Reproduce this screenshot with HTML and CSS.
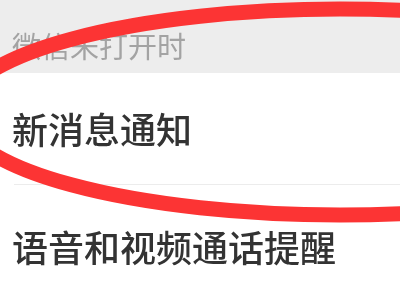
FILE: index.html
```html
<!DOCTYPE html>
<html lang="zh-CN">
<head>
<meta charset="utf-8">
<link rel="stylesheet" href="styles.css">
</head>
<body>
<div class="screen">
  <div class="section-header">微信未打开时</div>
  <div class="cell">新消息通知</div>
  <div class="divider"></div>
  <div class="cell cell-second">语音和视频通话提醒</div>
  <svg class="mark" width="400" height="300" viewBox="0 0 400 300">
    <ellipse cx="340" cy="112" rx="380" ry="103" fill="none" stroke="#fc3434" stroke-width="15"/>
  </svg>
</div>
</body>
</html>
```
FILE: styles.css
```css
html, body {
  margin: 0;
  padding: 0;
  background: #ffffff;
}
.screen {
  position: relative;
  width: 400px;
  height: 300px;
  overflow: hidden;
  font-family: "Noto Sans CJK SC", "Noto Sans", sans-serif;
  background: #ffffff;
  filter: blur(0.5px);
}
.section-header {
  height: 73px;
  box-sizing: border-box;
  background: #ededed;
  color: #a3a3a3;
  font-size: 29px;
  line-height: 32px;
  padding: 29px 0 0 12px;
}
.cell {
  height: 111px;
  box-sizing: border-box;
  display: flex;
  align-items: center;
  padding-left: 12px;
  color: #333333;
  font-size: 36px;
  font-weight: 500;
  line-height: 40px;
  padding-bottom: 2px;
}
.cell-second {
  padding-top: 10px;
  padding-bottom: 0;
}
.divider {
  height: 1px;
  margin-left: 14px;
  background: #ececec;
}
.mark {
  position: absolute;
  left: 0;
  top: 0;
}
```
